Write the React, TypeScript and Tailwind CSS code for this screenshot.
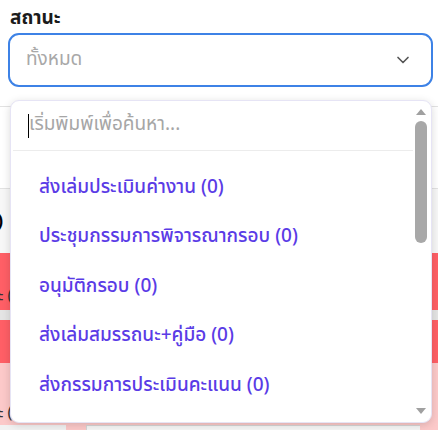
import { ChevronDown } from "lucide-react";

const options = [
  "ส่งเล่มประเมินค่างาน (0)",
  "ประชุมกรรมการพิจารณากรอบ (0)",
  "อนุมัติกรอบ (0)",
  "ส่งเล่มสมรรถนะ+คู่มือ (0)",
  "ส่งกรรมการประเมินคะแนน (0)",
];

const font = { fontFamily: '"Noto Sans Thai", "Noto Sans Thai Looped", "Noto Sans", "DejaVu Sans", sans-serif' };

export default function App() {
  return (
    <div className="relative w-[438px] h-[430px] overflow-hidden bg-white" style={font}>
      {/* filter header */}
      <div className="px-2 pt-[5px]">
        <p className="pl-[2px] text-[19px] font-bold leading-[27px] text-[#1b1b1b]">สถานะ</p>
        <div className="mt-[1px] flex h-[54px] w-[425px] items-center justify-between rounded-[11px] border-2 border-[#3d82e6] pl-[16px] pr-[18px]">
          <span className="text-[19px] text-[#a8a8a8]">ทั้งหมด</span>
          <ChevronDown className="h-[20px] w-[20px] text-[#555]" strokeWidth={2} />
        </div>
      </div>

      {/* table behind the menu */}
      <div className="mt-[19px] border-t border-[#e2e2e2]">
        <div className="h-[81px] bg-white" />
        <div className="flex h-[65px] items-center border-t border-[#e2e2e2] bg-[#f7f7f7] text-[18px] font-bold text-black">
          <span className="-ml-[3px]">)</span>
        </div>
        <div className="flex h-[57px] items-end bg-[#ff5f66] pb-[2px] text-[16px] text-[#333]">
          <span className="-ml-[2px]">ะ (</span>
        </div>
        <div className="h-[10px] bg-[#e4e4e4]" />
        <div className="h-[43px] bg-[#ff5f66]" />
        <div className="flex h-[62px] items-end bg-[#fcc9c9] text-[16px] text-[#333]">
          <span className="-ml-[2px]">ะ (</span>
        </div>
        <div className="flex h-[20px] bg-[#fcc9c9]">
          <div className="h-full w-[66px] bg-[#f2f2f2]" />
          <div className="ml-[20px] h-full w-[334px] border-l border-t border-[#d6d6d6] bg-[#f6f6f6]" />
        </div>
      </div>

      {/* open dropdown menu */}
      <div className="absolute left-[10px] top-[100px] flex h-[323px] w-[422px] rounded-[9px] border border-[#e6e4f5] bg-white shadow-[0_2px_8px_rgba(0,0,0,0.15)]">
        <div className="flex-1 pl-[2px]">
          <div className="flex h-[50px] items-center border-b border-[#ececec] pl-[15px]">
            <span className="h-[24px] w-px bg-black" />
            <span className="text-[19px] text-[#a6a6a6]">เริ่มพิมพ์เพื่อค้นหา...</span>
          </div>
          <ul className="pt-[12px]">
            {options.map((o) => (
              <li key={o} className="flex h-[49.5px] items-center pl-[26px] text-[19px] font-medium text-[#5a3be6]">
                {o}
              </li>
            ))}
          </ul>
        </div>
        <div className="flex w-[18px] flex-col items-center py-[8px] pr-[3px]">
          <span className="h-0 w-0 border-x-[5px] border-b-[6px] border-x-transparent border-b-[#a0a0a0]" />
          <span className="mt-[6px] h-[122px] w-[12px] rounded-full bg-[#a8a8a8]" />
          <span className="mt-auto h-0 w-0 border-x-[5px] border-t-[6px] border-x-transparent border-t-[#a0a0a0]" />
        </div>
      </div>
    </div>
  );
}
